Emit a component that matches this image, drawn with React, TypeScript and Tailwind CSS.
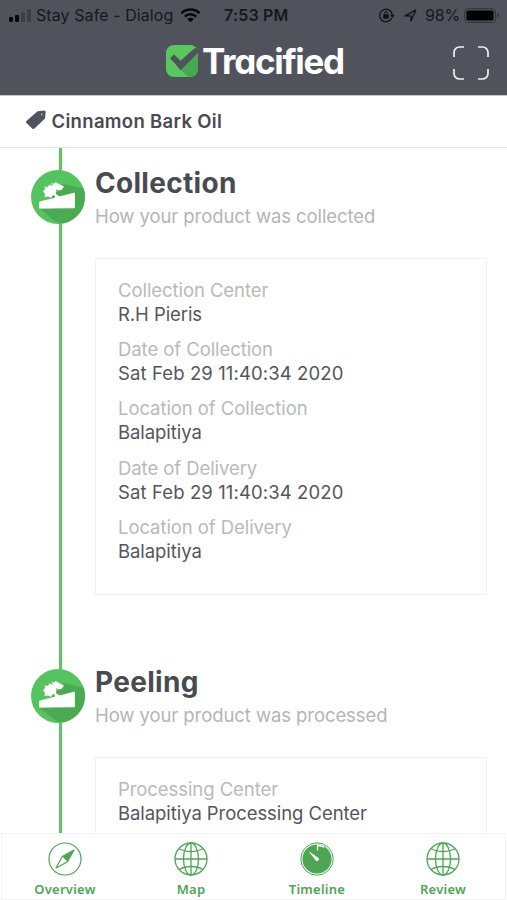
interface Field {
  label: string;
  value: string;
}

interface Stage {
  title: string;
  subtitle: string;
  fields: Field[];
}

const stages: Stage[] = [
  {
    title: 'Collection',
    subtitle: 'How your product was collected',
    fields: [
      { label: 'Collection Center', value: 'R.H Pieris' },
      { label: 'Date of Collection', value: 'Sat Feb 29 11:40:34 2020' },
      { label: 'Location of Collection', value: 'Balapitiya' },
      { label: 'Date of Delivery', value: 'Sat Feb 29 11:40:34 2020' },
      { label: 'Location of Delivery', value: 'Balapitiya' },
    ],
  },
  {
    title: 'Peeling',
    subtitle: 'How your product was processed',
    fields: [{ label: 'Processing Center', value: 'Balapitiya Processing Center' }],
  },
];

export default function App() {
  return (
    <div className="flex h-[900px] w-[507px] flex-col overflow-hidden bg-white font-['Inter',sans-serif]">
      <header className="h-[95px] shrink-0 bg-[#50535c]">
        <StatusBar />
        <TitleBar />
      </header>
      <div className="flex h-[53px] shrink-0 items-center border-t border-b border-t-[#c5c5cb] border-b-[#e6e6e8] pl-[25px]">
        <TagIcon />
        <span className="ml-[5.5px] text-[18.5px] font-semibold tracking-[0.32px] text-[#484b52]">
          Cinnamon Bark Oil
        </span>
      </div>
      <main className="min-h-0 flex-1 overflow-hidden">
        {stages.map((stage) => (
          <StageSection key={stage.title} stage={stage} />
        ))}
      </main>
      <BottomNav />
    </div>
  );
}

function StatusBar() {
  return (
    <div className="flex h-[30px] items-center pl-[9px] text-[16px] text-[#17181b]">
      <svg width="23" height="13" viewBox="0 0 23 13" className="shrink-0">
        <rect x="0" y="8" width="4" height="5" rx="1" fill="#08080a" />
        <rect x="6" y="6" width="4" height="7" rx="1" fill="#08080a" />
        <rect x="12" y="3" width="4" height="10" rx="1" fill="#3e4048" />
        <rect x="18" y="0" width="4" height="13" rx="1" fill="#3e4048" />
      </svg>
      <span className="ml-[4px] w-[137px] whitespace-nowrap tracking-[0.08px]">Stay Safe - Dialog</span>
      <svg width="21" height="15" viewBox="0 0 21 15" className="ml-[7px] shrink-0" fill="none" stroke="#08080a">
        <path d="M1.5 5.2a12.8 12.8 0 0 1 18 0" strokeWidth="2.7" />
        <path d="M4.8 8.6a8.1 8.1 0 0 1 11.4 0" strokeWidth="2.5" />
        <path d="M10.5 14.2 7.2 11a4.7 4.7 0 0 1 6.6 0Z" fill="#08080a" stroke="none" />
      </svg>
      <span className="ml-[23px] w-[66px] whitespace-nowrap font-semibold tracking-[0.2px]">7:53 PM</span>
      <svg width="16" height="15" viewBox="0 0 16 15" className="ml-[89px] shrink-0" fill="none" stroke="#121316" strokeWidth="1.3">
        <path d="M12.6 10.4A6.3 6.3 0 1 1 13.3 7.3" />
        <path d="M11 7h4.8l-2.4 3Z" fill="#121316" stroke="none" />
        <rect x="4.2" y="6.3" width="5.6" height="4.4" rx="0.6" fill="#121316" stroke="none" />
        <path d="M5.5 6.5V5.2a1.5 1.5 0 0 1 3 0v1.3" strokeWidth="1" />
      </svg>
      <svg width="13" height="13" viewBox="0 0 13 13" className="ml-[9px] shrink-0" fill="none" stroke="#121316" strokeWidth="1.3" strokeLinejoin="round">
        <path d="M1 6.8 11.8 1.2 7 12V6.8Z" />
      </svg>
      <span className="ml-[8px] w-[37px] whitespace-nowrap tracking-[-0.2px]">98%</span>
      <svg width="36" height="15" viewBox="0 0 36 15" className="ml-[2px] shrink-0">
        <rect x="0.6" y="0.6" width="31" height="13.8" rx="3.5" fill="none" stroke="#30323a" strokeWidth="1" />
        <rect x="2.4" y="2.4" width="27.2" height="10.2" rx="1.8" fill="#020203" />
        <path d="M33.4 5v5c1.8-.6 1.8-4.4 0-5Z" fill="#30323a" />
      </svg>
    </div>
  );
}

function TitleBar() {
  return (
    <div className="flex h-[65px] items-center pl-[166px]">
      <svg width="32" height="32" viewBox="0 0 32 32" className="mb-[4px] shrink-0">
        <rect width="32" height="32" rx="8" fill="#57c75e" />
        <path d="M14 24 32 9v15a8 8 0 0 1-8 8h-2Z" fill="#47a850" />
        <path d="M4 13 8.2 9.5l6.3 6.3L29.5 2.500 32 5V8L14.7 25.200Z" fill="#50535c" />
      </svg>
      <h1 className="mb-[3px] ml-[4px] w-[142px] text-[35px] leading-[40px] font-bold tracking-[-1.3px] whitespace-nowrap text-white [font-feature-settings:'cv11']">
        Tracified
      </h1>
      <svg width="36" height="34" viewBox="0 0 36 34" className="ml-[109px] shrink-0" fill="none" stroke="#f0f0f1" strokeWidth="1.7">
        <path d="M1 11V6.5A5.5 5.5 0 0 1 6.5 1H11M25 1h4.5A5.5 5.5 0 0 1 35 6.5V11M35 23v4.5A5.5 5.5 0 0 1 29.5 33H25M11 33H6.5A5.5 5.5 0 0 1 1 27.5V23" />
      </svg>
    </div>
  );
}

function StageSection({ stage }: { stage: Stage }) {
  return (
    <section className="flex h-[499px]">
      <div className="relative w-[95px] shrink-0">
        <div className="absolute top-0 left-[59px] h-full w-[3px] bg-[#58c75f]" />
        <StageIcon />
      </div>
      <div className="w-[392px] pt-[18px]">
        <h2 className="text-[28px] leading-[34px] font-bold tracking-[0.3px] text-[#484b52]">{stage.title}</h2>
        <p className="mt-[4px] text-[18.5px] leading-[25px] tracking-[-0.08px] whitespace-nowrap text-[#b5b5b6]">
          {stage.subtitle}
        </p>
        <div className="mt-[29px] h-[337px] rounded-[2px] border border-[#f0f0f1] pt-[19px] pl-[22px]">
          {stage.fields.map((field) => (
            <FieldRow key={field.label} field={field} />
          ))}
        </div>
      </div>
    </section>
  );
}

function FieldRow({ field }: { field: Field }) {
  const isDate = field.label.startsWith('Date');

  return (
    <div className="mb-[11.2px] text-[18.5px] leading-[24px] tracking-[-0.07px] whitespace-nowrap">
      <p className="text-[#b9b9ba]">{field.label}</p>
      <p className={isDate ? 'tracking-[0.11px] text-[#54565b]' : 'text-[#54565b]'}>{field.value}</p>
    </div>
  );
}

function StageIcon() {
  return (
    <svg width="54" height="54" viewBox="0 0 54 54" className="relative mt-[22px] ml-[31px]">
      <circle cx="27" cy="27" r="27" fill="#56c45e" />
      <path d="M32 14 52.7 18.5A27 27 0 0 1 34 53Q26 54 20 48L8 38Z" fill="#4aab52" />
      <path d="M8.5 32 43.5 23 43.5 37.8 8.5 38.2Z" fill="#fff" stroke="#fff" strokeWidth="0.8" strokeLinejoin="round" />
      {/* bush */}
      <path
        d="M12 21.500 14 19 13.500 16.500 16.500 17 18.500 14.500 21.500 15.500 25 17.500 25.500 21.500 24 25 21.500 25.500 20 28 17 26.500 13.500 27 14 24Z"
        fill="#fff"
      />
      <path d="M20 12.500 23 13.700 24.500 12 29 14.500 33 16.500 30.500 20 27 20.500 23.500 17.500Z" fill="#fff" />
      {/* trunk */}
      <path d="m21.500 19 4 5.500 6 4-6 2.500-2-5Z" fill="#fff" />
    </svg>
  );
}

function TagIcon() {
  return (
    <svg width="21" height="20" viewBox="0 0 21 20" className="mb-[3px] shrink-0">
      <path d="M12.5 1.2 19.3.4Q20.8.4 20.7 2L20 8.5 9.5 18.5Q8.3 19.5 7.2 18.4L1.3 12.8Q.4 11.8 1.4 10.9Z" fill="#50535c" />
      <circle cx="16.8" cy="4.3" r="1.1" fill="#9b9da3" />
    </svg>
  );
}

function BottomNav() {
  return (
    <nav className="mx-px grid h-[67px] shrink-0 grid-cols-[repeat(4,126px)] border border-[#f2f2f3] bg-white font-['Noto_Sans',sans-serif]">
      <NavItem label="Overview" icon={<CompassIcon />} />
      <NavItem label="Map" icon={<GlobeIcon />} />
      <NavItem label="Timeline" icon={<TimerIcon />} />
      <NavItem label="Review" icon={<GlobeIcon />} />
    </nav>
  );
}

function NavItem({ label, icon }: { label: string; icon: React.ReactNode }) {
  return (
    <div className="flex flex-col items-center pt-[8px] text-[#4ca653]">
      {icon}
      <span className="mt-[4px] text-[13px] leading-[18px] font-semibold tracking-[0.25px]">{label}</span>
    </div>
  );
}

function CompassIcon() {
  return (
    <svg width="34" height="34" viewBox="0 0 34 34" fill="none" stroke="currentColor" strokeWidth="1.2">
      <circle cx="17" cy="17" r="16" />
      <path d="M26 8 14.3 14.500 19.500 19.700Z" fill="currentColor" stroke="none" />
      <path d="M26 8 14.300 14.500 8 26 19.500 19.700Z" strokeLinejoin="round" />
    </svg>
  );
}

function GlobeIcon() {
  return (
    <svg width="34" height="34" viewBox="0 0 34 34" fill="none" stroke="currentColor" strokeWidth="1.3">
      <circle cx="17" cy="17" r="16" />
      <path d="M17 1v32M1 17h32" />
      <ellipse cx="17" cy="17" rx="7.5" ry="16" />
      <path d="M5 6.5c6.5 4 17.5 4 24 0M5 27.5c6.5-4 17.5-4 24 0" />
    </svg>
  );
}

function TimerIcon() {
  return (
    <svg width="34" height="34" viewBox="0 0 34 34">
      <circle cx="17" cy="17" r="16.2" fill="none" stroke="currentColor" strokeWidth="1" />
      <circle cx="17" cy="17" r="14.6" fill="currentColor" />
      <path d="M17.5 8.5V3.5a13.5 13.5 0 0 1 6.5 1.8" fill="none" stroke="#fff" strokeWidth="1.3" />
      <path d="M8.5 9 18.8 16.2a2 2 0 0 1-2.7 2.7Z" fill="#fff" />
    </svg>
  );
}
